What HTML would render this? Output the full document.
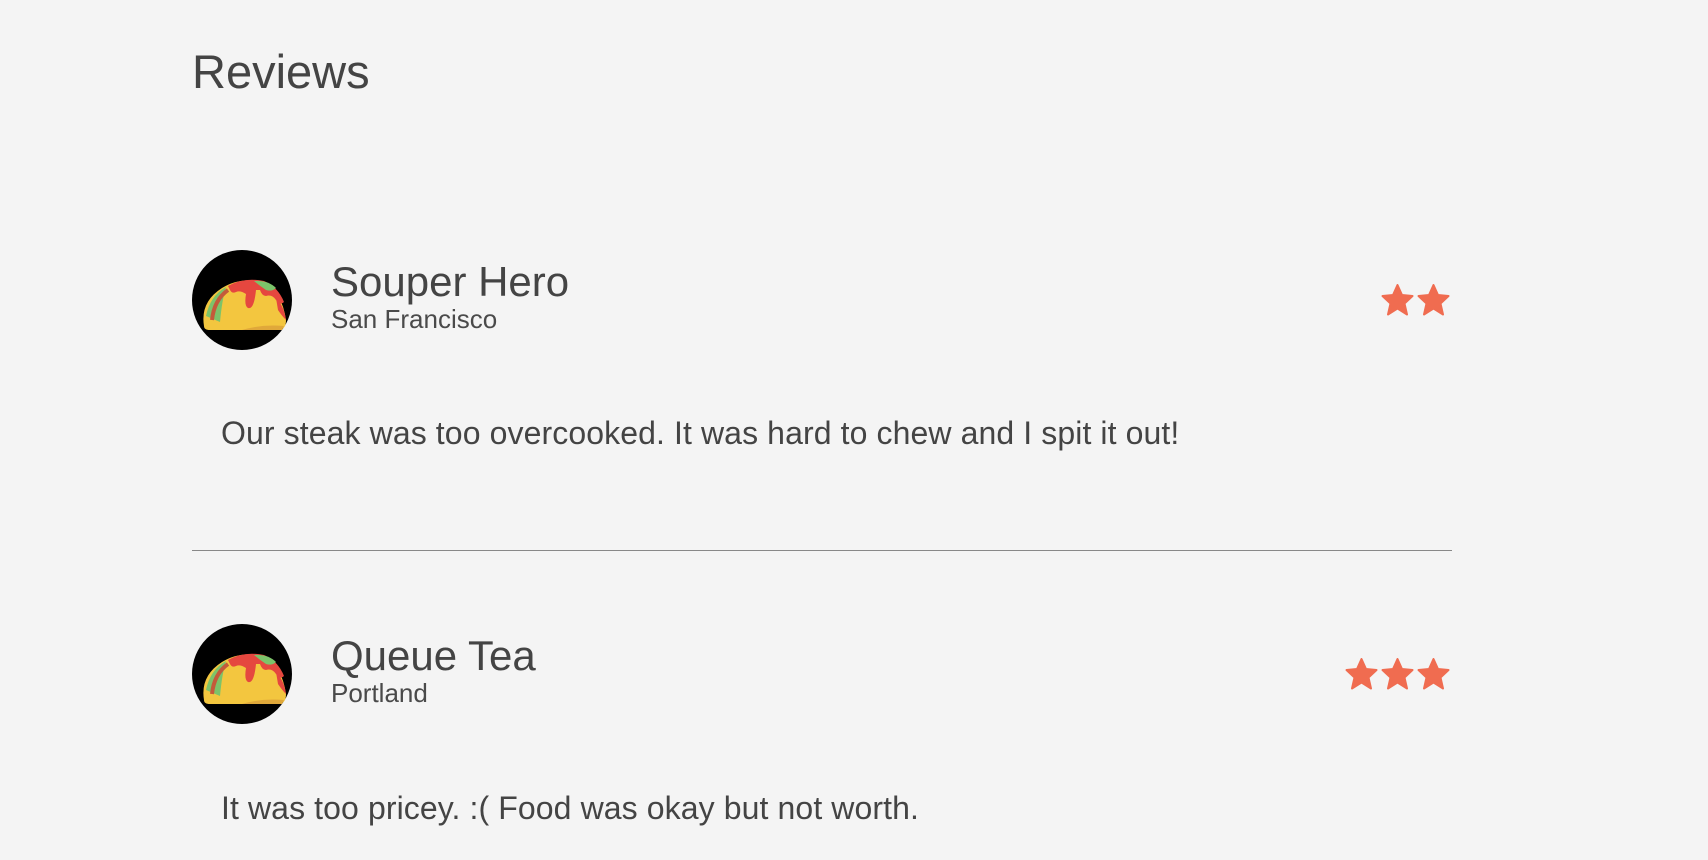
<!DOCTYPE html>
<html><head><meta charset="utf-8"><style>
html,body{margin:0;padding:0;width:1708px;height:860px;background:#f4f4f4;overflow:hidden;font-family:"Liberation Sans",Arial,sans-serif;color:#444}
.a{position:absolute;white-space:nowrap}
h1{position:absolute;left:192px;top:43px;margin:0;font-weight:normal;font-size:47px;line-height:58px;color:#444}
.av{position:absolute;left:192px;width:100px;height:100px}
.nm{font-size:42px;line-height:48px}
.loc{font-size:26px;line-height:30px;color:#4a4a4a}
.tx{font-size:32px;line-height:36px;letter-spacing:0.1px}
.st{position:absolute;width:33px;height:32px}
hr{position:absolute;left:192px;top:550px;width:1260px;margin:0;border:0;border-top:1.5px solid #888}
</style></head><body>
<svg width="0" height="0" style="position:absolute"><defs>
<g id="taco">
<circle cx="50" cy="50" r="50" fill="#000"/>
<path d="M12 76 Q8 52 30 38 Q50 26 72 33 Q90 42 94 70 Q94 80 86 80 L18 80 Q12 80 12 76Z" fill="#f3c63f"/>
<path d="M14 66 Q18 46 34 37 Q30 50 28 72Z" fill="#7cc36a"/>
<path d="M20 70 Q22 50 36 40" stroke="#c45a3a" stroke-width="4" fill="none"/>
<path d="M36 36 Q52 27 72 31 Q86 37 92 52 Q88 56 84 50 Q80 44 74 46 Q70 46 68 40 L64 40 Q62 60 56 58 Q52 56 54 44 Q48 40 44 42 Q40 44 38 40Z" fill="#e5473f"/>
<path d="M62 31 Q76 30 84 38 Q80 42 74 40 Q68 36 62 31Z" fill="#7cc36a"/>
<path d="M84 48 Q92 56 94 70 Q90 66 86 60Z" fill="#e5473f"/>
<path d="M50 80 Q70 74 92 76 L90 80Z" fill="#e0a83a"/>
</g>
<path id="star" d="M16 1 L20.5 11 L31 12 L23 19.5 L25.5 30.5 L16 24.5 L6.5 30.5 L9 19.5 L1 12 L11.5 11Z" fill="#f06c50" stroke="#f06c50" stroke-width="2" stroke-linejoin="round"/>
</defs></svg>

<h1>Reviews</h1>

<svg class="av" style="top:250px" viewBox="0 0 100 100"><use href="#taco"/></svg>
<div class="a nm" style="left:331px;top:258px">Souper Hero</div>
<div class="a loc" style="left:331px;top:304px">San Francisco</div>
<svg class="st" style="left:1381px;top:284px" viewBox="0 0 32 32"><use href="#star"/></svg>
<svg class="st" style="left:1417px;top:284px" viewBox="0 0 32 32"><use href="#star"/></svg>
<div class="a tx" style="left:221px;top:415px">Our steak was too overcooked. It was hard to chew and I spit it out!</div>

<hr>

<svg class="av" style="top:624px" viewBox="0 0 100 100"><use href="#taco"/></svg>
<div class="a nm" style="left:331px;top:632px">Queue Tea</div>
<div class="a loc" style="left:331px;top:678px">Portland</div>
<svg class="st" style="left:1345px;top:658px" viewBox="0 0 32 32"><use href="#star"/></svg>
<svg class="st" style="left:1381px;top:658px" viewBox="0 0 32 32"><use href="#star"/></svg>
<svg class="st" style="left:1417px;top:658px" viewBox="0 0 32 32"><use href="#star"/></svg>
<div class="a tx" style="left:221px;top:790px">It was too pricey. :( Food was okay but not worth.</div>
</body></html>
